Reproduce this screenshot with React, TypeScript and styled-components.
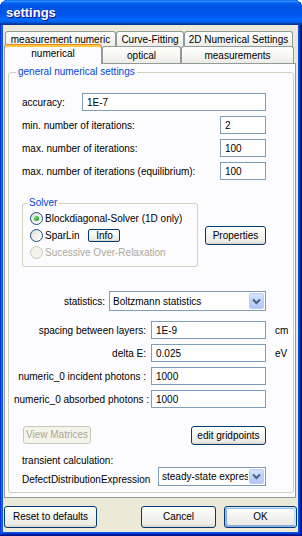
import React from "react";
import styled, { createGlobalStyle, css } from "styled-components";

const GlobalStyle = createGlobalStyle`
  html, body { margin: 0; padding: 0; background: #ffffff; }
  body { font-family: "Liberation Sans", Arial, sans-serif; font-size: 10px; color: #000; }
  * { box-sizing: border-box; }
`;

const FONT = `"Liberation Sans", Arial, sans-serif`;

const Window = styled.div`
  width: 302px;
  height: 536px;
  display: flex;
  flex-direction: column;
  background: #0855dd;
  border-radius: 8px 8px 0 0;
  overflow: hidden;
  box-shadow: inset -1px -1px #00138c, inset 1px 1px #0831d9, inset -2px -2px #001ea0,
    inset 2px 2px #166aee, inset -3px -3px #003bda, inset 3px 3px #0855dd;
`;

const TitleBar = styled.div`
  flex: none;
  height: 25px;
  display: flex;
  align-items: center;
  padding-left: 6px;
  color: #fff;
  font: bold 13px ${FONT};
  text-shadow: 1px 1px #0f1089;
  background: linear-gradient(
    180deg,
    #0058ee 0%,
    #3593ff 4%,
    #288eff 6%,
    #127dff 8%,
    #036ffc 10%,
    #0262ee 14%,
    #0057e5 20%,
    #0054e3 24%,
    #0055eb 56%,
    #005bf5 66%,
    #026afe 76%,
    #0062ef 86%,
    #0052d6 92%,
    #0040ab 94%,
    #003092 100%
  );
`;

const Client = styled.div`
  flex: 1;
  min-height: 0;
  margin: 0 4px 4px 3px;
  padding: 6px 1px 4px 1px;
  background: #ece9d8;
  display: flex;
  flex-direction: column;
`;

const TabRowBack = styled.div`
  flex: none;
  display: flex;
  height: 15px;
  padding-left: 1px;
`;

const TabRowFront = styled.div`
  flex: none;
  display: flex;
  align-items: flex-end;
  height: 18px;
  margin-bottom: -1px;
`;

const Tab = styled.div<{ $w: number; $active?: boolean; $back?: boolean }>`
  flex: none;
  width: ${(p) => p.$w}px;
  height: ${(p) => (p.$back ? 15 : 17)}px;
  margin-bottom: ${(p) => (p.$back ? 0 : 1)}px;
  border: 1px solid #919b9c;
  border-bottom: none;
  border-radius: 3px 3px 0 0;
  background: linear-gradient(180deg, #ffffff 0%, #f7f7f4 50%, #ecebe5 100%);
  display: flex;
  align-items: center;
  justify-content: center;
  white-space: nowrap;
  font: 10px ${FONT};
  ${(p) =>
    p.$active &&
    css`
      position: relative;
      z-index: 1;
      height: 20px;
      margin-bottom: 0;
      padding-bottom: 2px;
      background: #fcfcfe;
      border-top: 1px solid #e68b2c;
      box-shadow: inset 0 2px #ffc83c;
    `}
`;

const Panel = styled.div`
  flex: 1;
  min-height: 0;
  margin-right: 1px;
  border: 1px solid #919b9c;
  background: #fcfcfe;
  padding: 2px 1px 4px 3px;
  display: flex;
  flex-direction: column;
`;

const Group = styled.fieldset`
  margin: 0;
  padding: 0;
  min-width: 0;
  border: 1px solid #d0d0bf;
  border-radius: 3px;
`;

const MainGroup = styled(Group)`
  flex: 1;
`;

const Legend = styled.legend<{ $indent: number }>`
  margin-left: ${(p) => p.$indent}px;
  padding: 0 2px;
  font: 10px ${FONT};
  line-height: 12px;
  color: #0046d5;
`;

const GroupBody = styled.div`
  display: flex;
  flex-direction: column;
  padding: 15px 27px 3px 13px;
`;

const Row = styled.div<{ $top: number }>`
  display: flex;
  align-items: center;
  margin-top: ${(p) => p.$top}px;
`;

const Label = styled.span`
  flex: 1;
  white-space: nowrap;
  font: 10px ${FONT};
`;

const FixedLabel = styled.span<{ $w: number }>`
  flex: none;
  width: ${(p) => p.$w}px;
  white-space: nowrap;
  font: 10px ${FONT};
`;

const TextInput = styled.input<{ $w: number }>`
  flex: none;
  width: ${(p) => p.$w}px;
  height: 18px;
  margin: 0;
  padding: 0 0 0 4px;
  border: 1px solid #7f9db9;
  background: #fff;
  color: #000;
  font: 10px ${FONT};
  outline: none;
`;

const SolverRow = styled.div`
  display: flex;
  align-items: flex-start;
  margin-top: 17px;
`;

const SolverGroup = styled(Group)`
  flex: none;
  width: 176px;
`;

const SolverBody = styled.div`
  display: flex;
  flex-direction: column;
  padding: 1px 0 5px 7px;
`;

const RadioRow = styled.label<{ $disabled?: boolean }>`
  display: flex;
  align-items: center;
  height: 17px;
  gap: 2px;
  white-space: nowrap;
  font: 10px ${FONT};
  color: ${(p) => (p.$disabled ? "#aca899" : "#000")};
`;

const RadioDot = styled.span<{ $checked?: boolean; $disabled?: boolean }>`
  flex: none;
  width: 13px;
  height: 13px;
  border-radius: 50%;
  border: 1px solid ${(p) => (p.$disabled ? "#cac8bb" : "#1c5180")};
  background: ${(p) =>
    p.$disabled ? "#f5f4ea" : "linear-gradient(135deg, #dcdcd7 0%, #ffffff 90%)"};
  display: flex;
  align-items: center;
  justify-content: center;
  &::after {
    content: "";
    display: ${(p) => (p.$checked ? "block" : "none")};
    width: 5px;
    height: 5px;
    border-radius: 50%;
    background: radial-gradient(circle at 35% 35%, #6ce46c 0%, #2fab2f 60%, #1b8a1b 100%);
  }
`;

const Button = styled.button<{ $w: number; $h: number; $default?: boolean }>`
  flex: none;
  width: ${(p) => p.$w}px;
  height: ${(p) => p.$h}px;
  margin: 0;
  padding: 0;
  border: 1px solid #003c74;
  border-radius: 3px;
  background: linear-gradient(180deg, #ffffff 0%, #f3f3ef 50%, #ecebe6 86%, #d6d0c5 100%);
  color: #000;
  font: 10px ${FONT};
  line-height: 1;
  white-space: nowrap;
  &:disabled {
    border-color: #c9c7ba;
    color: #aca899;
    background: #f5f4ea;
  }
  ${(p) =>
    p.$default &&
    css`
      box-shadow: inset -1px 1px #cee7ff, inset 1px 2px #98b8ea, inset -2px 2px #bcd4f6,
        inset 1px -1px #89ade4, inset 2px -2px #89ade4;
    `}
`;

const InfoButton = styled(Button)`
  margin-left: 7px;
  border-radius: 2px;
`;

const PropertiesButton = styled(Button)`
  margin: 29px 0 0 7px;
`;

const StatRow = styled.div`
  display: flex;
  align-items: center;
  justify-content: flex-end;
  gap: 4px;
  margin-top: 24px;
`;

const Combo = styled.div<{ $w: number; $h: number }>`
  flex: none;
  width: ${(p) => p.$w}px;
  height: ${(p) => p.$h}px;
  border: 1px solid #7f9db9;
  background: #fff;
  display: flex;
  align-items: stretch;
`;

const ComboText = styled.span`
  flex: 1;
  min-width: 0;
  overflow: hidden;
  white-space: nowrap;
  display: flex;
  align-items: center;
  padding-left: 3px;
  font: 10px ${FONT};
`;

const ComboButton = styled.span`
  flex: none;
  width: 15px;
  margin: 1px;
  border: 1px solid #bccbf5;
  border-radius: 2px;
  background: linear-gradient(180deg, #d7e3fd 0%, #c1d3fb 50%, #b2c7f6 100%);
  display: flex;
  align-items: center;
  justify-content: center;
`;

const ValueGrid = styled.div`
  display: grid;
  grid-template-columns: 132px 115px max-content;
  grid-auto-rows: 18px;
  column-gap: 5px;
  row-gap: 5px;
  align-items: center;
  margin: 10px 0 0 -8px;
`;

const GridLabel = styled.span`
  text-align: right;
  white-space: nowrap;
  font: 10px ${FONT};
`;

const Unit = styled.span`
  padding-left: 4px;
  font: 10px ${FONT};
`;

const GridInput = styled(TextInput)`
  width: 115px;
`;

const ActionRow = styled.div`
  display: flex;
  align-items: flex-start;
  justify-content: space-between;
  margin-top: 18px;
  padding-left: 1px;
`;

const TransientRow = styled.div`
  display: flex;
  align-items: flex-end;
  justify-content: space-between;
  margin-top: 6px;
`;

const TransientLabel = styled.div`
  display: flex;
  flex-direction: column;
  white-space: nowrap;
  font: 10px ${FONT};
  line-height: 19px;
`;

const TransientCombo = styled(Combo)`
  margin-bottom: 3px;
`;

const ButtonBar = styled.div`
  flex: none;
  display: flex;
  align-items: center;
  gap: 8px;
  margin-top: 8px;
  height: 22px;
`;

const Spacer = styled.div`
  flex: 1;
`;

const Chevron = () => (
  <svg width="9" height="7" viewBox="0 0 9 7">
    <polyline points="1,1.5 4.5,5 8,1.5" fill="none" stroke="#4d6185" strokeWidth="2" />
  </svg>
);

export default function App() {
  return (
    <>
      <GlobalStyle />
      <Window>
        <TitleBar>settings</TitleBar>
        <Client>
          <TabRowBack>
            <Tab $back $w={111}>measurement numeric</Tab>
            <Tab $back $w={68}>Curve-Fitting</Tab>
            <Tab $back $w={109}>2D Numerical Settings</Tab>
          </TabRowBack>
          <TabRowFront>
            <Tab $active $w={98}>numerical</Tab>
            <Tab $w={79}>optical</Tab>
            <Tab $w={113}>measurements</Tab>
          </TabRowFront>
          <Panel>
            <MainGroup>
              <Legend $indent={7}>general numerical settings</Legend>
              <GroupBody>
                <Row $top={0}>
                  <FixedLabel $w={60}>accuracy:</FixedLabel>
                  <TextInput $w={184} defaultValue="1E-7" />
                </Row>
                <Row $top={5}>
                  <Label>min. number of iterations:</Label>
                  <TextInput $w={46} defaultValue="2" />
                </Row>
                <Row $top={5}>
                  <Label>max. number of iterations:</Label>
                  <TextInput $w={46} defaultValue="100" />
                </Row>
                <Row $top={5}>
                  <Label>max. number of iterations (equilibrium):</Label>
                  <TextInput $w={46} defaultValue="100" />
                </Row>

                <SolverRow>
                  <SolverGroup>
                    <Legend $indent={4}>Solver</Legend>
                    <SolverBody>
                      <RadioRow>
                        <RadioDot $checked />
                        Blockdiagonal-Solver (1D only)
                      </RadioRow>
                      <RadioRow>
                        <RadioDot />
                        SparLin
                        <InfoButton $w={32} $h={13}>Info</InfoButton>
                      </RadioRow>
                      <RadioRow $disabled>
                        <RadioDot $disabled />
                        Sucessive Over-Relaxation
                      </RadioRow>
                    </SolverBody>
                  </SolverGroup>
                  <PropertiesButton $w={61} $h={19}>Properties</PropertiesButton>
                </SolverRow>

                <StatRow>
                  <GridLabel>statistics:</GridLabel>
                  <Combo $w={157} $h={20}>
                    <ComboText>Boltzmann statistics</ComboText>
                    <ComboButton>
                      <Chevron />
                    </ComboButton>
                  </Combo>
                </StatRow>

                <ValueGrid>
                  <GridLabel>spacing between layers:</GridLabel>
                  <GridInput $w={115} defaultValue="1E-9" />
                  <Unit>cm</Unit>
                  <GridLabel>delta E:</GridLabel>
                  <GridInput $w={115} defaultValue="0.025" />
                  <Unit>eV</Unit>
                  <GridLabel>numeric_0 incident photons :</GridLabel>
                  <GridInput $w={115} defaultValue="1000" />
                  <span />
                  <GridLabel>numeric_0 absorbed photons :</GridLabel>
                  <GridInput $w={115} defaultValue="1000" />
                  <span />
                </ValueGrid>

                <ActionRow>
                  <Button $w={68} $h={18} disabled>
                    View Matrices
                  </Button>
                  <Button $w={75} $h={19}>edit gridpoints</Button>
                </ActionRow>

                <TransientRow>
                  <TransientLabel>
                    <span>transient calculation:</span>
                    <span>DefectDistributionExpression</span>
                  </TransientLabel>
                  <TransientCombo $w={108} $h={19}>
                    <ComboText>steady-state expression</ComboText>
                    <ComboButton>
                      <Chevron />
                    </ComboButton>
                  </TransientCombo>
                </TransientRow>
              </GroupBody>
            </MainGroup>
          </Panel>
          <ButtonBar>
            <Button $w={93} $h={22}>Reset to defaults</Button>
            <Spacer />
            <Button $w={75} $h={22}>Cancel</Button>
            <Button $w={73} $h={22} $default>OK</Button>
          </ButtonBar>
        </Client>
      </Window>
    </>
  );
}
